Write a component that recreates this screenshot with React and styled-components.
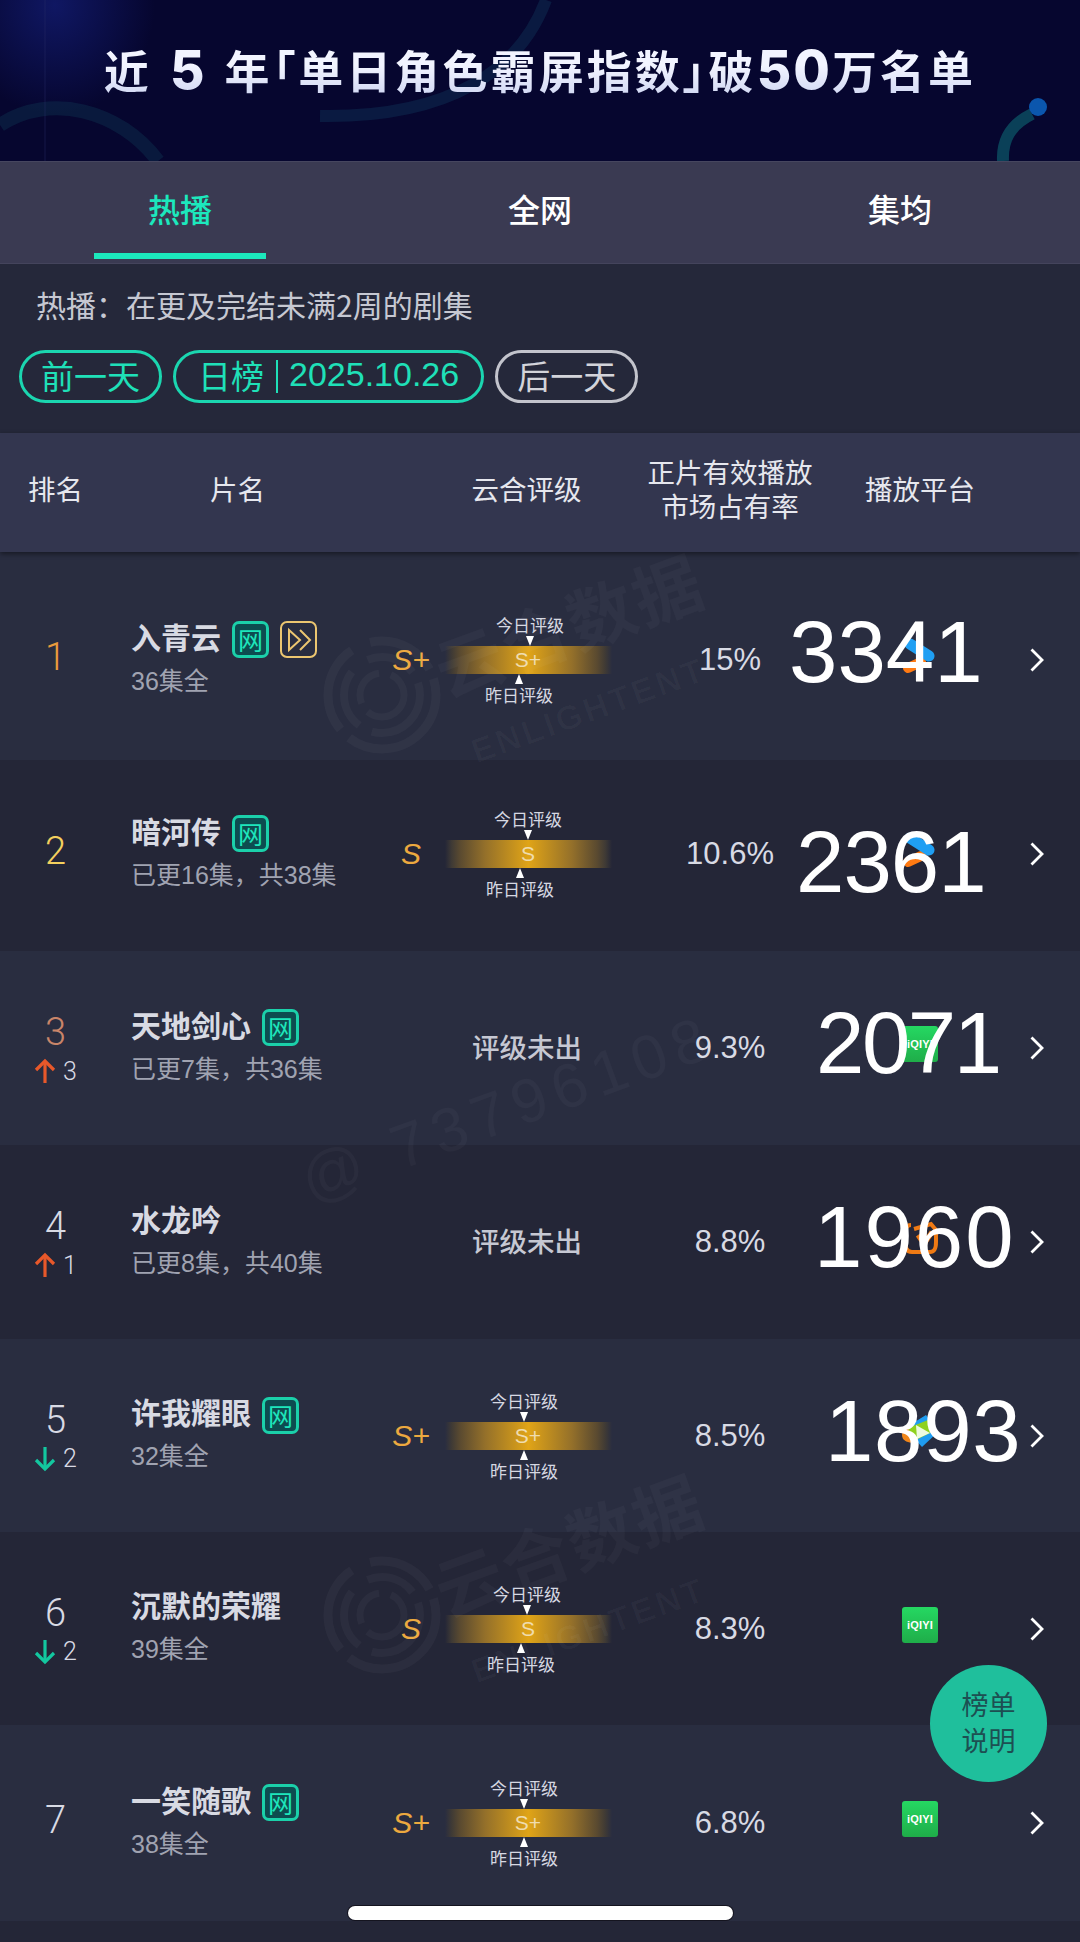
import React from 'react';
import styled, { createGlobalStyle, css } from 'styled-components';

const CJK = '"Noto Sans CJK SC", "Noto Sans", sans-serif';
const LATIN = '"Liberation Sans", "Noto Sans CJK SC", sans-serif';

const GlobalStyle = createGlobalStyle`
  html, body {
    margin: 0;
    padding: 0;
    background: #242637;
  }
  #root {
    width: 1080px;
    height: 1942px;
    overflow: hidden;
  }
`;

const Page = styled.div`
  position: relative;
  width: 1080px;
  height: 1942px;
  overflow: hidden;
  background: #242637;
  font-family: ${LATIN};
`;

const Banner = styled.header`
  position: relative;
  height: 161px;
  background:
    radial-gradient(ellipse 100px 110px at 55px 5px, rgba(25, 40, 150, 0.5), transparent),
    #06062f;
  overflow: hidden;
  display: flex;
  justify-content: center;
  padding-top: 41px;
  box-sizing: border-box;
`;

const BannerArt = styled.svg`
  position: absolute;
  left: 0;
  top: 0;
`;

const BannerTitle = styled.h1`
  position: relative;
  margin: 0;
  font-family: ${CJK};
  font-size: 45px;
  line-height: 58px;
  font-weight: 700;
  letter-spacing: 3.1px;
  white-space: nowrap;
  font-feature-settings: "palt";
  background: linear-gradient(180deg, #f2f4ff 20%, #9fade2 85%);
  -webkit-background-clip: text;
  background-clip: text;
  color: transparent;
`;

const BannerDigits = styled.span`
  font-family: "Inter", sans-serif;
  font-weight: 800;
  font-size: 53px;
  letter-spacing: 2px;
  margin: ${(props) => props.$margin || '0'};
`;

const Tabs = styled.nav`
  display: flex;
  height: 103px;
  box-sizing: border-box;
  background: #3a3a52;
  border-top: 1px solid #46465f;
  border-bottom: 1px solid #44445c;
`;

const Tab = styled.div`
  width: 360px;
  display: flex;
  flex-direction: column;
  align-items: center;
  padding-top: 25px;
  box-sizing: border-box;
  font-family: ${CJK};
  font-size: 32px;
  line-height: 42px;
  font-weight: 500;
  color: ${(props) => (props.$active ? '#1ce8bd' : '#ffffff')};
`;

const TabLine = styled.div`
  width: 172px;
  height: 6px;
  margin-top: 24px;
  background: #1ce8bd;
`;

const Info = styled.section`
  height: 169px;
  box-sizing: border-box;
  padding: 22px 0 0 19px;
  background: #25283a;
`;

const InfoText = styled.div`
  padding-left: 17px;
  font-family: ${CJK};
  font-size: 30px;
  line-height: 36px;
  color: #c6c8d2;
`;

const Pills = styled.div`
  display: flex;
  gap: 11px;
  margin-top: 28px;
`;

const Pill = styled.div`
  height: 53px;
  box-sizing: border-box;
  padding: 0 ${(props) => props.$pad || '19px'} 4px;
  border: 3px solid ${(props) => (props.$muted ? '#c3c4cc' : '#1bd6b0')};
  border-radius: 27px;
  display: flex;
  align-items: center;
  font-family: ${LATIN};
  font-size: 33px;
  color: ${(props) => (props.$muted ? '#d3d4da' : '#1fe0b8')};
  white-space: nowrap;
`;

const PillDate = styled.span`
  font-size: 34px;
`;

const PillRule = styled.span`
  width: 2px;
  height: 33px;
  margin: 4px 11px 0 12px;
  background: currentColor;
`;

const columns = css`
  display: grid;
  grid-template-columns: 111px 269px 70px 157px 246px 134px 93px;
  align-items: center;
`;

const TableHead = styled.div`
  ${columns}
  position: relative;
  z-index: 2;
  height: 119px;
  box-sizing: border-box;
  padding-bottom: 10px;
  background: #33364f;
  box-shadow: 0 2px 5px rgba(0, 0, 0, 0.45);
  font-family: ${CJK};
  font-size: 27.5px;
  line-height: 34px;
  color: #e6e7ee;
`;

const HeadCell = styled.div`
  grid-column: ${(props) => props.$col};
  text-align: center;
  white-space: nowrap;
  padding-left: ${(props) => props.$pad || '0'};
  margin-right: ${(props) => props.$mr || '0'};
  justify-self: ${(props) => (props.$pad ? 'start' : 'center')};
`;

const List = styled.div`
  position: relative;
`;

const Row = styled.div`
  ${columns}
  position: relative;
  height: ${(props) => props.$h}px;
  box-sizing: border-box;
  padding: ${(props) => props.$pt || 0}px 0 ${(props) => props.$pb || 0}px;
  background: ${(props) => (props.$odd ? '#292d40' : '#242637')};
`;

const RankCell = styled.div`
  display: flex;
  flex-direction: column;
  align-items: center;
  gap: 6px;
  margin-bottom: ${(props) => (props.$plain ? '6px' : '0')};
`;

const RankNumber = styled.div`
  font-family: "Roboto", sans-serif;
  font-weight: 300;
  font-size: 38px;
  line-height: 40px;
  color: ${(props) => props.$color};
`;

const Delta = styled.div`
  display: flex;
  align-items: center;
  gap: 7px;
  height: 26px;
  font-family: "Roboto", sans-serif;
  font-weight: 300;
  font-size: 25px;
  color: #d8dae4;
`;

const TitleCell = styled.div`
  padding-left: 20px;
  margin-bottom: 3px;
`;

const TitleLine = styled.div`
  display: flex;
  align-items: center;
  gap: 11px;
  height: 38px;
`;

const Title = styled.div`
  margin-bottom: 8px;
  font-family: ${CJK};
  font-size: 30px;
  line-height: 38px;
  font-weight: 700;
  color: #d8dae3;
`;

const Badge = styled.div`
  width: 37px;
  height: 37px;
  box-sizing: border-box;
  display: flex;
  align-items: center;
  justify-content: center;
  border: ${(props) => (props.$gold ? '2px solid #ecc670' : '3px solid #1bd0aa')};
  border-radius: 7px;
  background: ${(props) => (props.$gold ? 'transparent' : '#0d4c50')};
  font-family: ${CJK};
  font-size: 25px;
  line-height: 1;
  color: #1ee6bb;
`;

const Sub = styled.div`
  margin-top: 6px;
  font-family: ${LATIN};
  font-size: 25px;
  line-height: 32px;
  color: #a0a3b1;
  white-space: nowrap;
`;

const Letter = styled.div`
  justify-self: center;
  margin-right: 8px;
  font-family: "Liberation Sans", sans-serif;
  font-style: italic;
  font-size: 30px;
  color: #eca93f;
`;

const Rating = styled.div`
  display: flex;
  flex-direction: column;
  gap: 11px;
  margin: 0 -5px;
`;

const RatingLabel = styled.div`
  position: relative;
  width: 68px;
  height: 20px;
  margin-left: ${(props) => props.$x - 29}px;
  font-family: ${CJK};
  font-size: 17px;
  line-height: 20px;
  color: #d6d8e2;
  white-space: nowrap;

  &::after {
    content: '';
    position: absolute;
    left: 30px;
    ${(props) => (props.$below ? 'top: -11px;' : 'bottom: -11px;')}
    border-left: 4px solid transparent;
    border-right: 4px solid transparent;
    ${(props) => (props.$below ? 'border-bottom' : 'border-top')}: 10px solid #ffffff;
  }
`;

const Bar = styled.div`
  height: 28px;
  display: flex;
  align-items: center;
  background: linear-gradient(90deg, transparent 0, #3f3a35 4%, #5a4a30 9%, #94702a 24%, #e0a417 50%, #94702a 76%, #5a4a30 91%, #3f3a35 96%, transparent 100%);
`;

const BarText = styled.span`
  width: 40px;
  margin-left: 63px;
  text-align: center;
  font-size: 21px;
  color: #efdcae;
`;

const Pending = styled.div`
  grid-column: 4;
  justify-self: center;
  margin: 0 3px 5px 0;
  font-family: ${CJK};
  font-size: 27.5px;
  font-weight: 500;
  color: #c6c8d3;
  white-space: nowrap;
`;

const Share = styled.div`
  grid-column: 5;
  text-align: center;
  font-size: 31px;
  color: #d8dae4;
`;

const Platform = styled.div`
  grid-column: 6;
  justify-self: center;
  width: 36px;
  height: 36px;
  margin-bottom: 8px;
`;

const Iqiyi = styled.div`
  width: 36px;
  height: 36px;
  border-radius: 3px;
  background: linear-gradient(180deg, #25d862, #1fad49);
  display: flex;
  align-items: center;
  justify-content: center;
  font-size: 11px;
  font-weight: 700;
  letter-spacing: 0.2px;
  color: #ffffff;
`;

const Chevron = styled.svg`
  grid-column: 7;
  margin-left: 43px;
`;

const BigCount = styled.div`
  position: absolute;
  left: ${(props) => props.$left}px;
  top: calc(50% + ${(props) => props.$dy}px);
  transform: translateY(-50%);
  font-size: 87px;
  line-height: 1;
  letter-spacing: ${(props) => props.$track || 0}px;
  color: #ffffff;
`;

const Filler = styled.div`
  height: 21px;
`;

const Stamp = styled.div`
  position: absolute;
  left: 320px;
  top: ${(props) => props.$top}px;
  width: 420px;
  height: 220px;
  pointer-events: none;
`;

const StampRings = styled.svg`
  position: absolute;
  left: 0;
  top: 78px;
`;

const StampName = styled.div`
  position: absolute;
  left: 108px;
  top: 18px;
  font-family: ${CJK};
  font-weight: 700;
  font-size: 68px;
  letter-spacing: 2px;
  white-space: nowrap;
  color: rgba(255, 255, 255, 0.03);
  transform: rotate(-20deg);
`;

const StampLatin = styled.div`
  position: absolute;
  left: 145px;
  top: 136px;
  font-weight: 700;
  font-size: 34px;
  letter-spacing: 3px;
  white-space: nowrap;
  color: rgba(255, 255, 255, 0.028);
  transform: rotate(-20deg);
`;

const Handle = styled.div`
  position: absolute;
  left: 315px;
  top: 1145px;
  font-size: 62px;
  letter-spacing: 8px;
  white-space: nowrap;
  color: rgba(255, 255, 255, 0.03);
  transform: rotate(-20deg);
  transform-origin: left bottom;
  pointer-events: none;
`;

const Fab = styled.div`
  position: absolute;
  left: 930px;
  top: 1665px;
  width: 117px;
  height: 117px;
  box-sizing: border-box;
  padding-bottom: 4px;
  border-radius: 50%;
  background: #1fbf9c;
  display: flex;
  align-items: center;
  justify-content: center;
  text-align: center;
  font-family: ${CJK};
  font-size: 27px;
  line-height: 36px;
  color: #1d4f52;
`;

const HomeBar = styled.div`
  position: absolute;
  left: 348px;
  top: 1906px;
  width: 385px;
  height: 14px;
  border-radius: 7px;
  background: #ffffff;
  box-shadow: 0 0 0 1px #14141f;
`;

function ArrowIcon({ down }) {
  const color = down ? '#13c79f' : '#e8582a';
  return (
    <svg width="22" height="26" viewBox="0 0 22 26" fill="none" stroke={color} strokeWidth="3.2" style={down ? { transform: 'rotate(180deg)' } : undefined}>
      <path d="M11 25V3" />
      <path d="M2 12l9-9 9 9" />
    </svg>
  );
}

function YoukuIcon() {
  return (
    <svg width="36" height="36" viewBox="0 0 36 36" fill="none" strokeLinecap="round">
      <path d="M6 30l13-6" stroke="#ff7a12" strokeWidth="10" />
      <path d="M8 6l19 12" stroke="#1f9ff3" strokeWidth="11" />
    </svg>
  );
}

function MangoIcon() {
  return (
    <svg width="36" height="36" viewBox="0 0 36 36" fill="none" stroke="#ef7a14" strokeWidth="4">
      <path d="M9 5C4 5 3 9 3 18s1 14 7 14h18c5 0 6-4 6-10V13" />
      <path d="M12 9l17-5 5 6" />
      <path d="M16 15l6 9 8-12" strokeWidth="5" />
    </svg>
  );
}

function TencentIcon() {
  return (
    <svg width="36" height="36" viewBox="0 0 36 36">
      <path d="M3 14L24 1 36 18 20 33z" fill="#1f9cf0" />
      <path d="M0 21c0-4 4-9 9-9l5 16c-7 2-14-1-14-7z" fill="#f0861a" />
      <path d="M6 14L26 6l6 11-20 10z" fill="#8fd11f" />
      <path d="M14 11l14 8-13 6z" fill="#eefbe0" />
    </svg>
  );
}

function PlayBadgeIcon() {
  return (
    <svg width="28" height="28" viewBox="0 0 28 28" fill="none" stroke="#ecc670" strokeWidth="2">
      <path d="M4 4v20l11-10z" />
      <path d="M15 4l10 10-10 10" />
    </svg>
  );
}

const platforms = {
  youku: <YoukuIcon />,
  mango: <MangoIcon />,
  tencent: <TencentIcon />,
  iqiyi: <Iqiyi>iQIYI</Iqiyi>,
};

const rows = [
  { rank: 1, color: '#e99b3c', title: '入青云', sub: '36集全', grade: 'S+', today: 80, yesterday: 69, share: '15%', platform: 'youku', count: '3341', left: 789, dy: -5, h: 208, pt: 8 },
  { rank: 2, color: '#f4d05e', title: '暗河传', sub: '已更16集\uFF0C共38集', grade: 'S', today: 78, yesterday: 70, share: '10.6%', platform: 'youku', count: '2361', left: 796, dy: 5, track: -1, h: 191, pb: 3 },
  { rank: 3, color: '#c98569', delta: 3, title: '天地剑心', sub: '已更7集\uFF0C共36集', share: '9.3%', platform: 'iqiyi', count: '2071', left: 816, dy: -6, track: -2.5, h: 194 },
  { rank: 4, color: '#d8dae4', delta: 1, title: '水龙吟', noBadge: true, sub: '已更8集\uFF0C共40集', share: '8.8%', platform: 'mango', count: '1960', left: 814, dy: -6, track: 2, h: 194 },
  { rank: 5, color: '#d8dae4', delta: -2, title: '许我耀眼', sub: '32集全', grade: 'S+', today: 74, yesterday: 74, share: '8.5%', platform: 'tencent', count: '1893', left: 825, dy: -6, track: 0.7, h: 193 },
  { rank: 6, color: '#d8dae4', delta: -2, title: '沉默的荣耀', noBadge: true, sub: '39集全', grade: 'S', today: 77, yesterday: 71, share: '8.3%', platform: 'iqiyi', h: 193 },
  { rank: 7, color: '#d8dae4', title: '一笑随歌', sub: '38集全', grade: 'S+', today: 74, yesterday: 74, share: '6.8%', platform: 'iqiyi', h: 196 },
];

function WatermarkStamp({ top }) {
  const ring = { fill: 'none', stroke: 'rgba(255,255,255,0.035)' };
  return (
    <Stamp $top={top}>
      <StampRings width="124" height="124" viewBox="0 0 124 124">
        <circle cx="62" cy="62" r="54" {...ring} strokeWidth="9" strokeDasharray="120 12 90 20 70 10" />
        <circle cx="62" cy="62" r="38" {...ring} strokeWidth="8" strokeDasharray="70 14 60 20 50 12" />
        <circle cx="62" cy="62" r="22" {...ring} strokeWidth="7" strokeDasharray="50 10 40 12" />
      </StampRings>
      <StampName>云合数据</StampName>
      <StampLatin>ENLIGHTENT</StampLatin>
    </Stamp>
  );
}

function TableRow({ row, odd }) {
  return (
    <Row $h={row.h} $pt={row.pt} $pb={row.pb} $odd={odd}>
      <RankCell $plain={!row.delta}>
        <RankNumber $color={row.color}>{row.rank}</RankNumber>
        {row.delta ? (
          <Delta>
            <ArrowIcon down={row.delta < 0} />
            {Math.abs(row.delta)}
          </Delta>
        ) : null}
      </RankCell>
      <TitleCell>
        <TitleLine>
          <Title>{row.title}</Title>
          {row.noBadge ? null : <Badge>网</Badge>}
          {row.rank === 1 ? (
            <Badge $gold>
              <PlayBadgeIcon />
            </Badge>
          ) : null}
        </TitleLine>
        <Sub>{row.sub}</Sub>
      </TitleCell>
      {row.grade ? (
        <>
          <Letter>{row.grade}</Letter>
          <Rating>
            <RatingLabel $x={row.today}>今日评级</RatingLabel>
            <Bar>
              <BarText>{row.grade}</BarText>
            </Bar>
            <RatingLabel $x={row.yesterday} $below>昨日评级</RatingLabel>
          </Rating>
        </>
      ) : (
        <Pending>评级未出</Pending>
      )}
      <Share>{row.share}</Share>
      <Platform>{platforms[row.platform]}</Platform>
      <Chevron width="14" height="24" viewBox="0 0 14 24" fill="none" stroke="#ffffff" strokeWidth="2.8">
        <path d="M1.5 1.5L12 12 1.5 22.5" />
      </Chevron>
      {row.count ? <BigCount $left={row.left} $dy={row.dy} $track={row.track}>{row.count}</BigCount> : null}
    </Row>
  );
}

export default function App() {
  return (
    <Page>
      <GlobalStyle />
      <Banner>
        <BannerArt width="1080" height="161" viewBox="0 0 1080 161" fill="none">
          <path d="M546 0C520 70 450 118 320 116" stroke="#123a5c" strokeOpacity="0.4" strokeWidth="12" />
          <path d="M0 125C50 92 120 110 158 161" stroke="#0f3a55" strokeOpacity="0.38" strokeWidth="14" />
          <path d="M45 0V161" stroke="#2a2d66" strokeOpacity="0.45" />
          <path d="M1032 114C1010 125 1002 140 1003 161" stroke="#0d5a6a" strokeOpacity="0.7" strokeWidth="12" />
          <ellipse cx="1038" cy="107" rx="9" ry="9" fill="#0b56ad" />
        </BannerArt>
        <BannerTitle>
          近<BannerDigits $margin="0 18px">5</BannerDigits>年「单日角色霸屏指数」破<BannerDigits>50</BannerDigits>万名单
        </BannerTitle>
      </Banner>
      <Tabs>
        <Tab $active>
          热播
          <TabLine />
        </Tab>
        <Tab>全网</Tab>
        <Tab>集均</Tab>
      </Tabs>
      <Info>
        <InfoText>{'热播\uFF1A在更及完结未满2周的剧集'}</InfoText>
        <Pills>
          <Pill>前一天</Pill>
          <Pill $pad="22px">
            日榜
            <PillRule />
            <PillDate>2025.10.26</PillDate>
          </Pill>
          <Pill $muted>后一天</Pill>
        </Pills>
      </Info>
      <TableHead>
        <HeadCell $col="1">排名</HeadCell>
        <HeadCell $col="2" $pad="99px">片名</HeadCell>
        <HeadCell $col="4" $mr="4px">云合评级</HeadCell>
        <HeadCell $col="5">正片有效播放<br />市场占有率</HeadCell>
        <HeadCell $col="6">播放平台</HeadCell>
      </TableHead>
      <List>
        {rows.map((row, i) => (
          <TableRow key={row.rank} row={row} odd={i % 2 === 0} />
        ))}
        <Filler />
      </List>
      <WatermarkStamp top={555} />
      <WatermarkStamp top={1475} />
      <Handle>@ 73796108</Handle>
      <Fab>榜单<br />说明</Fab>
      <HomeBar />
    </Page>
  );
}
